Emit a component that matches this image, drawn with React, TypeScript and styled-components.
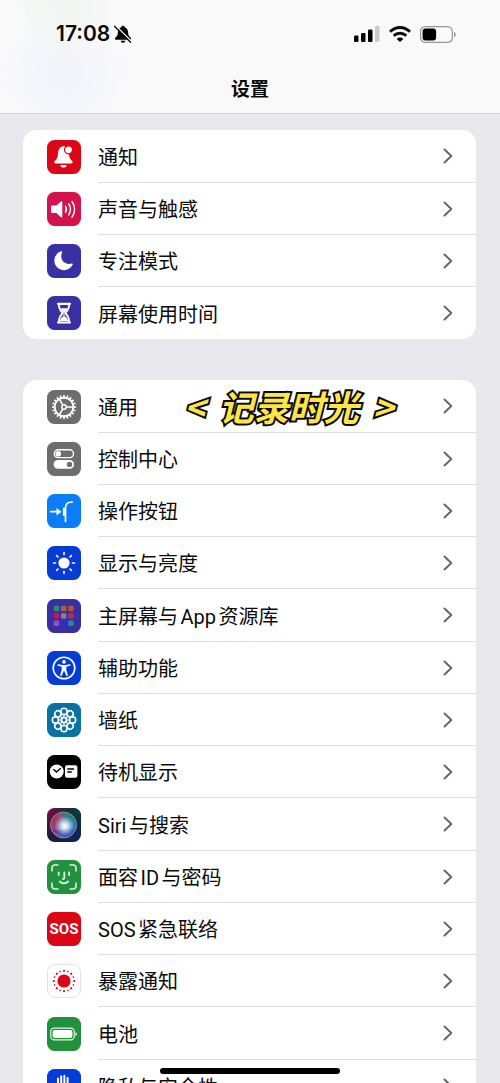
import React from "react";
import styled, { createGlobalStyle } from "styled-components";

const GlobalStyle = createGlobalStyle`
  * { box-sizing: border-box; }
  body {
    margin: 0;
    background: #e9e9ed;
    color: #0b0b0c;
    font-family: Roboto, "Noto Sans CJK SC", sans-serif;
  }
`;

const Screen = styled.div`
  display: flex;
  flex-direction: column;
  height: 100vh;
  overflow: hidden;
`;

const Header = styled.header`
  flex: none;
  background:
    radial-gradient(circle at 66px 4px, #f0f7f1 0, rgba(240, 247, 241, 0) 56px),
    radial-gradient(circle at 64px 72px, #f2f4fc 0, rgba(242, 244, 252, 0) 64px),
    #f9f9fa;
  border-bottom: 1px solid #d2d2d5;
`;

const StatusBar = styled.div`
  display: flex;
  align-items: center;
  justify-content: space-between;
  height: 68px;
  padding: 0 44px 0 56px;
`;

const StatusSide = styled.div<{ $gap: number }>`
  display: flex;
  align-items: center;
  gap: ${(p) => p.$gap}px;
`;

const Time = styled.time`
  font: 600 21px/24px Inter, sans-serif;
`;

const Title = styled.h1`
  margin: 0;
  padding: 6px 0 11px;
  font: 700 19px/28px "Noto Sans CJK SC", sans-serif;
  text-align: center;
`;

const Content = styled.main`
  flex: 1;
  min-height: 0;
  overflow-y: auto;
  scrollbar-width: none;
  padding: 16px 24px 0 23px;
  display: flex;
  flex-direction: column;
  gap: 41px;
`;

const Group = styled.ul`
  flex: none;
  margin: 0;
  padding: 0;
  list-style: none;
  background: #fff;
  border-radius: 14px;
`;

const Item = styled.li`
  height: 52px;
  &:nth-child(4n + 1) {
    height: 53px;
  }
`;

const RowLink = styled.a`
  display: flex;
  align-items: center;
  gap: 17px;
  height: 100%;
  padding-left: 24px;
  color: inherit;
  text-decoration: none;
`;

const RowBody = styled.span`
  flex: 1;
  display: flex;
  align-items: center;
  height: 100%;
  padding-right: 23px;
  border-bottom: 1px solid #dededf;

  ${Item}:last-child & {
    border-bottom: 0;
  }
`;

const Label = styled.span`
  font-size: 20px;
  line-height: 28px;
  padding-top: 3px;
  white-space: nowrap;
  text-autospace: normal;
`;

const Note = styled.strong`
  display: flex;
  gap: 14px;
  margin-left: 46px;
  font: italic 700 35px/40px "Noto Sans CJK SC", sans-serif;
  white-space: nowrap;
  color: #fbe54b;
  -webkit-text-stroke: 4px #0c0a08;
  paint-order: stroke fill;
  text-shadow: 1px 1px 0 #0c0a08;
`;

const Chevron = styled.svg`
  flex: none;
  margin-left: auto;
`;

const Tile = styled.svg`
  flex: none;
  display: block;
`;

const HomeIndicator = styled.div`
  position: fixed;
  bottom: 9px;
  left: 50%;
  width: 36%;
  height: 6px;
  margin-left: -18%;
  border-radius: 3px;
  background: #000;
`;

const range = (n: number) => Array.from({ length: n }, (_, i) => i);

type IconDef = { bg: string; art: React.ReactNode; edge?: string };

const white = "#fff";

const icons: Record<string, IconDef> = {
  bell: {
    bg: "#dc0716",
    art: (
      <>
        <path
          fill={white}
          d="M16.5 6c-3.7 1-5.4 3.9-5.5 7.5-.1 4-1 5.400-3.200 7.600-.9.9-.5 2.300.8 2.300h15.800c1.300 0 1.700-1.400.8-2.300-2.200-2.200-3.100-3.600-3.200-7.600-.1-3.600-1.800-6.500-5.500-7.500z"
        />
        <path fill={white} d="M13.500 25h6a3 2.600 0 0 1-6 0z" />
        <circle cx="21.500" cy="9.800" r="4" fill={white} stroke="#dc0716" strokeWidth="1.200" />
      </>
    ),
  },
  sound: {
    bg: "#d4124d",
    art: (
      <>
        <path
          fill={white}
          d="M5.200 13.500h4.200l4.600-4.100c.6-.5 1.300-.2 1.300.6v14.600c0 .8-.7 1.100-1.300.6L9.400 21H5.200c-.7 0-1.200-.5-1.200-1.200v-5.100c0-.7.5-1.200 1.200-1.200z"
        />
        <g fill="none" stroke={white} strokeWidth="1.500" strokeLinecap="round">
          <path d="M18.500 14.300c1.100 1.800 1.100 4.200 0 6" />
          <path d="M21.700 11.800c2.200 3.300 2.200 7.700 0 11" />
          <path d="M25 9.500c3.300 4.700 3.300 10.900 0 15.600" />
        </g>
      </>
    ),
  },
  moon: {
    bg: "#3931a3",
    art: (
      <path
        fill={white}
        d="M14.200 7.300c.7-.3 1.200.2.9.9-2.900 7.200 2 13.200 9.700 11.400.8-.2 1.200.3.900 1-1.600 3.400-4.900 5.600-8.700 5.600-5.400 0-9.700-4.300-9.700-9.600 0-4.200 2.700-7.900 6.900-9.300z"
      />
    ),
  },
  hourglass: {
    bg: "#3931a3",
    art: (
      <>
        <g fill="none" stroke={white} strokeWidth="1.800" strokeLinejoin="round" strokeLinecap="round">
          <path d="M11 7.800h12M11 26.500h12" strokeWidth="2.200" />
          <path d="M11.800 8.500c0 4.500 1.400 6 3.700 8.600-2.300 2.600-3.700 4.200-3.700 8.800M22.200 8.500c0 4.500-1.400 6-3.700 8.600 2.300 2.600 3.700 4.200 3.700 8.800" />
        </g>
        <path fill={white} d="M13.300 12.300h7.400c-.6 1.700-2.100 3-3.200 4.500v3.500c1.700 1 3 2.300 3.600 4.700h-8.200c.6-2.400 1.900-3.700 3.600-4.700v-3.500c-1.100-1.500-2.600-2.800-3.200-4.500z" />
      </>
    ),
  },
  gear: {
    bg: "#6d6d6e",
    art: (
      <g fill="none" stroke={white}>
        <circle cx="17" cy="17" r="9.300" strokeWidth="1.900" />
        <circle cx="17" cy="17" r="2.200" strokeWidth="1.400" />
        <path d="M19.200 17h7M15.900 15.100l-3.600-6.100M15.900 18.900l-3.600 6.100" strokeWidth="1.500" />
        {range(20).map((i) => (
          <path key={i} d="M17 7.300V5" strokeWidth="1.700" transform={`rotate(${i * 18} 17 17)`} />
        ))}
      </g>
    ),
  },
  controls: {
    bg: "#6d6d6e",
    art: (
      <>
        <rect x="7.300" y="7.800" width="19.200" height="7.800" rx="3.900" fill="none" stroke={white} strokeWidth="1.400" />
        <circle cx="11.300" cy="11.700" r="2.800" fill={white} />
        <rect x="6.600" y="18" width="20.400" height="8.800" rx="4.400" fill={white} />
        <circle cx="22.500" cy="22.400" r="2.700" fill="#6d6d6e" />
      </>
    ),
  },
  action: {
    bg: "#0a7dfb",
    art: (
      <>
        <path d="M3.700 17.700h7" stroke={white} strokeWidth="1.700" strokeLinecap="round" />
        <path fill={white} d="M9.500 14l5 3.700-5 3.700z" />
        <path d="M16.900 14.500v6.500" stroke={white} strokeWidth="2" strokeLinecap="round" />
        <path d="M18.500 27.500V14c0-4 1.700-6 6.800-6" fill="none" stroke={white} strokeWidth="1.700" strokeLinecap="round" />
      </>
    ),
  },
  brightness: {
    bg: "#063bd6",
    art: (
      <>
        <circle cx="17" cy="17" r="5.600" fill={white} />
        {range(8).map((i) => (
          <path
            key={i}
            d="M17 8.500V6.500"
            stroke={white}
            strokeWidth="1.600"
            strokeLinecap="round"
            transform={`rotate(${i * 45} 17 17)`}
          />
        ))}
      </>
    ),
  },
  home: {
    bg: "#39309f",
    art: (
      <>
        {["#2f8a6c", "#b35a36", "#c04f33", "#d5123d", "#7f8b87", "#c32462", "#8c4fd0", "#1c34d8", "#208d90"].map(
          (c, i) => (
            <rect key={c} x={6.800 + (i % 3) * 7.200} y={6.800 + Math.floor(i / 3) * 7.400} width="5.400" height="5.400" rx="1.200" fill={c} />
          ),
        )}
      </>
    ),
  },
  accessibility: {
    bg: "#063bd6",
    art: (
      <>
        <circle cx="17" cy="17" r="10.800" fill="none" stroke={white} strokeWidth="1.600" />
        <circle cx="17" cy="10.900" r="1.800" fill={white} />
        <path
          fill={white}
          d="M11.300 13.200l4 .8c1.100.2 2.300.2 3.400 0l4-.8c1-.2 1.300 1.200.3 1.500l-3.700 1.100v3l1.500 5.300c.3 1-1.100 1.400-1.500.4L17.200 20h-.4l-2.100 4.500c-.4 1-1.800.6-1.500-.4l1.500-5.300v-3L11 14.700c-1-.3-.7-1.700.3-1.500z"
        />
      </>
    ),
  },
  wallpaper: {
    bg: "#0b71a0",
    art: (
      <g fill="none" stroke={white} strokeWidth="1.600">
        {range(8).map((i) => (
          <g key={i} transform={`rotate(${i * 45} 17 17)`}>
            <circle cx="17" cy="8.400" r="3.100" />
            <path d="M17 11.500V16" strokeWidth="1.100" />
          </g>
        ))}
        <circle cx="17" cy="17" r="3" strokeWidth="1.200" />
        <circle cx="17" cy="17" r="1.300" fill="#2a5570" stroke="none" />
      </g>
    ),
  },
  standby: {
    bg: "#000",
    art: (
      <>
        <circle cx="9.700" cy="16.500" r="7" fill={white} />
        <path d="M6.800 14.500l2.600 2.500 4-3.500" fill="none" stroke="#000" strokeWidth="1.300" strokeLinecap="round" />
        <rect x="18" y="10.300" width="12.400" height="12.400" rx="2" fill={white} />
        <path d="M20.300 14h6.700M20.300 17h4.500" stroke="#000" strokeWidth="1.300" />
      </>
    ),
  },
  siri: {
    bg: "url(#siri-base)",
    art: (
      <>
        <defs>
          <linearGradient id="siri-base" x1="0" y1="0" x2="1" y2="1">
            <stop offset="0" stopColor="#7c1240" />
            <stop offset=".45" stopColor="#1f1a33" />
            <stop offset="1" stopColor="#0c2a5a" />
          </linearGradient>
          <radialGradient id="siri-green" cx=".85" cy=".12" r=".65">
            <stop offset="0" stopColor="#063f35" />
            <stop offset="1" stopColor="#063f35" stopOpacity="0" />
          </radialGradient>
          <linearGradient id="siri-orb" x1="0" y1=".3" x2="1" y2=".7">
            <stop offset="0" stopColor="#c42463" />
            <stop offset=".35" stopColor="#a0608c" />
            <stop offset=".65" stopColor="#3c8fae" />
            <stop offset="1" stopColor="#1673d1" />
          </linearGradient>
          <radialGradient id="siri-glow" cx=".55" cy=".54" r=".4">
            <stop offset="0" stopColor="#fff" />
            <stop offset=".3" stopColor="#e6f6ff" stopOpacity=".85" />
            <stop offset="1" stopColor="#9fd8ee" stopOpacity="0" />
          </radialGradient>
        </defs>
        <rect width="34" height="34" rx="8" fill="url(#siri-green)" />
        <circle cx="16.500" cy="17" r="13" fill="url(#siri-orb)" opacity=".85" />
        <path d="M13 4.500c8-1.500 15 4 16.300 11C23 14 17 11 13 4.500z" fill="#1f7f78" opacity=".75" />
        <circle cx="16.500" cy="17" r="13" fill="none" stroke="#b9a5c6" strokeWidth=".9" opacity=".7" />
        <path d="M5 21c4 5 9 7 13 8 5-1 8-5 9-9-6 2-14 3-22 1z" fill="#4a2fb8" opacity=".75" />
        <circle cx="16.500" cy="17" r="13" fill="url(#siri-glow)" />
      </>
    ),
  },
  face: {
    bg: "#21913d",
    art: (
      <g fill="none" stroke="#dff5df" strokeWidth="1.500" strokeLinecap="round">
        <path d="M5 11V8a3 3 0 0 1 3-3h3M23 5h3a3 3 0 0 1 3 3v3M29 23v3a3 3 0 0 1-3 3h-3M11 29H8a3 3 0 0 1-3-3v-3" />
        <path d="M11.700 12.500v2.400M22 12.500v2.400M17.300 12.500v5.500c0 .8-.5 1.200-1.400 1.200M12.700 21.500c2.500 2.300 6 2.300 8.500 0" strokeWidth="1.800" />
      </g>
    ),
  },
  sos: {
    bg: "#dc0716",
    art: (
      <text x="17" y="22" textAnchor="middle" fill={white} fontFamily="Roboto, sans-serif" fontWeight="700" fontSize="15">
        SOS
      </text>
    ),
  },
  exposure: {
    bg: "#fff",
    edge: "#e9dfe0",
    art: (
      <>
        <circle cx="17" cy="17" r="6.600" fill="#dc0716" />
        {range(16).map((i) => (
          <circle key={i} cx="17" cy="6.800" r={i % 2 ? 0.8 : 1.1} fill="#dc0716" transform={`rotate(${i * 22.5} 17 17)`} />
        ))}
      </>
    ),
  },
  battery: {
    bg: "#21913d",
    art: (
      <>
        <rect x="3.700" y="11.200" width="23.600" height="11.600" rx="3.600" fill="none" stroke="#e4f6e4" strokeWidth="1.200" />
        <rect x="5.600" y="13" width="19.800" height="8" rx="2" fill={white} />
        <path d="M28.500 15.200c2 .4 2 3.200 0 3.600z" fill="#e4f6e4" />
      </>
    ),
  },
  privacy: {
    bg: "#063bd6",
    art: (
      <g stroke={white} strokeWidth="2" strokeLinecap="round" fill="none">
        <path d="M11 18V9.500M14.200 17V7.200M17.400 17V6.800M20.600 18V9M23.500 20l2-4.500" />
        <path d="M11 17h10.500l2 3-3 6h-6.500l-3-4z" fill={white} strokeLinejoin="round" />
      </g>
    ),
  },
};

function AppIcon({ name }: { name: string }) {
  const { bg, art, edge } = icons[name];
  return (
    <Tile width="34" height="34" viewBox="0 0 34 34" aria-hidden="true">
      <rect x={edge ? 0.5 : 0} y={edge ? 0.5 : 0} width={edge ? 33 : 34} height={edge ? 33 : 34} rx="7.500" fill={bg} stroke={edge} />
      {art}
    </Tile>
  );
}

type RowData = { icon: string; label: string; note?: string };

const groups: RowData[][] = [
  [
    { icon: "bell", label: "通知" },
    { icon: "sound", label: "声音与触感" },
    { icon: "moon", label: "专注模式" },
    { icon: "hourglass", label: "屏幕使用时间" },
  ],
  [
    { icon: "gear", label: "通用", note: "记录时光" },
    { icon: "controls", label: "控制中心" },
    { icon: "action", label: "操作按钮" },
    { icon: "brightness", label: "显示与亮度" },
    { icon: "home", label: "主屏幕与App资源库" },
    { icon: "accessibility", label: "辅助功能" },
    { icon: "wallpaper", label: "墙纸" },
    { icon: "standby", label: "待机显示" },
    { icon: "siri", label: "Siri与搜索" },
    { icon: "face", label: "面容ID与密码" },
    { icon: "sos", label: "SOS紧急联络" },
    { icon: "exposure", label: "暴露通知" },
    { icon: "battery", label: "电池" },
    { icon: "privacy", label: "隐私与安全性" },
  ],
];

function Row({ icon, label, note }: RowData) {
  return (
    <Item>
      <RowLink href="#">
        <AppIcon name={icon} />
        <RowBody>
          <Label>{label}</Label>
          {note && (
            <Note>
              <span>&lt;</span>
              <span>{note}</span>
              <span>&gt;</span>
            </Note>
          )}
          <Chevron width="10" height="16" viewBox="0 0 10 16" aria-hidden="true">
            <path d="M1.500 1.500L8.300 8l-6.800 6.500" fill="none" stroke="#67676a" strokeWidth="2" strokeLinecap="round" strokeLinejoin="round" />
          </Chevron>
        </RowBody>
      </RowLink>
    </Item>
  );
}

export default function App() {
  return (
    <Screen>
      <GlobalStyle />
      <Header>
        <StatusBar>
          <StatusSide $gap={4}>
            <Time>17:08</Time>
            <svg width="18" height="18" viewBox="0 0 18 18" aria-hidden="true">
              <path d="M9 .8c-1 0-1.600.6-1.700 1.400C5 3 4 5 3.900 7.300c-.1 3-.7 3.800-2.600 5.500-.8.8-.5 1.900.6 1.900h14.200c1.100 0 1.400-1.100.6-1.900-1.900-1.700-2.500-2.500-2.600-5.500C14 5 13 3 10.700 2.200 10.600 1.400 10 .8 9 .8z" />
              <path d="M6.700 15.700h4.600a2.300 2 0 0 1-4.600 0z" />
              <path d="M1.500.5L17.500 16.500" stroke="#f9f9fa" strokeWidth="1.400" />
              <path d="M.5 1.200l16 16" stroke="#0b0b0c" strokeWidth="1.300" strokeLinecap="round" />
            </svg>
          </StatusSide>
          <StatusSide $gap={9}>
            <svg width="26" height="16" viewBox="0 0 26 16" aria-hidden="true">
              <rect x="0" y="9.500" width="4.500" height="6.500" rx="1.300" />
              <rect x="7" y="7" width="4.500" height="9" rx="1.300" />
              <rect x="14" y="3.500" width="4.500" height="12.500" rx="1.300" />
              <rect x="21" y="0" width="4.500" height="16" rx="1.300" fill="#cbcbcc" />
            </svg>
            <svg width="22" height="16" viewBox="0 0 22 16" aria-hidden="true">
              <g fill="none" stroke="#0b0b0c" strokeWidth="2.900">
                <path d="M1 5.800c5.700-5.700 14.300-5.700 20 0" />
                <path d="M4.700 9.800c3.600-3.500 9-3.500 12.600 0" />
              </g>
              <path d="M7.700 12.900c1.900-1.800 4.700-1.800 6.600 0L11 16z" />
            </svg>
            <svg width="36" height="17" viewBox="0 0 36 17" aria-hidden="true">
              <rect x=".6" y=".6" width="31.800" height="15.800" rx="4.800" fill="none" stroke="#97979a" strokeWidth="1.200" />
              <rect x="2.600" y="2.600" width="13.500" height="11.800" rx="3" />
              <path d="M34 6c2.300.5 2.300 4.500 0 5z" fill="#97979a" />
            </svg>
          </StatusSide>
        </StatusBar>
        <Title>设置</Title>
      </Header>
      <Content>
        {groups.map((rows) => (
          <Group key={rows[0].label}>
            {rows.map((row) => (
              <Row key={row.label} {...row} />
            ))}
          </Group>
        ))}
      </Content>
      <HomeIndicator />
    </Screen>
  );
}
